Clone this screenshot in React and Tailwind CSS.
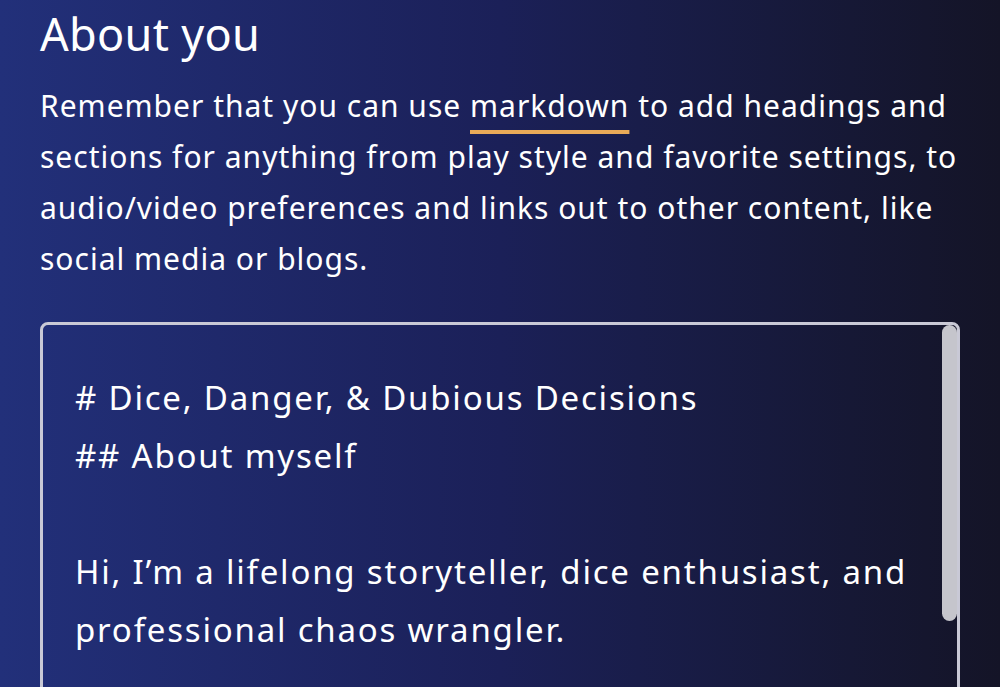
const bio = `# Dice, Danger, & Dubious Decisions
## About myself

Hi, I’m a lifelong storyteller, dice enthusiast, and professional chaos wrangler.

I run games most weekends.`;

const App = () => {
  return (
    <div
      className="min-h-screen h-[687px] overflow-hidden bg-gradient-to-r from-[#22307a] via-[#1b2058] to-[#141427] text-white"
      style={{ fontFamily: '"Noto Sans", "Open Sans", sans-serif' }}
    >
      <div className="pl-10 pr-10 pt-[4px]">
        <h1 className="text-[45px] leading-[60px] font-normal tracking-[0.3px]">About you</h1>
        <p className="mt-[16px] text-[30px] leading-[51px] tracking-[1px] w-[922px]">
          Remember that you can use{" "}
          <span className="underline decoration-[#e9aa58] decoration-[4px] underline-offset-[13px]">
            markdown
          </span>{" "}
          to add headings and sections for anything from play style and favorite settings, to
          audio/video preferences and links out to other content, like social media or blogs.
        </p>

        <div className="relative mt-[38px] w-[920px] h-[420px] rounded-[8px] border-[3px] border-[#c9c9d6] overflow-hidden">
          <div className="pl-[32px] pr-[40px] pt-[44px] text-[33px] leading-[58px] tracking-[1.8px] whitespace-pre-wrap">
            {bio}
          </div>
          <div className="absolute right-0 top-0 w-[15px] h-[296px] rounded-[8px] bg-[#c5c5cc]" />
        </div>
      </div>
    </div>
  );
};

export default App;
